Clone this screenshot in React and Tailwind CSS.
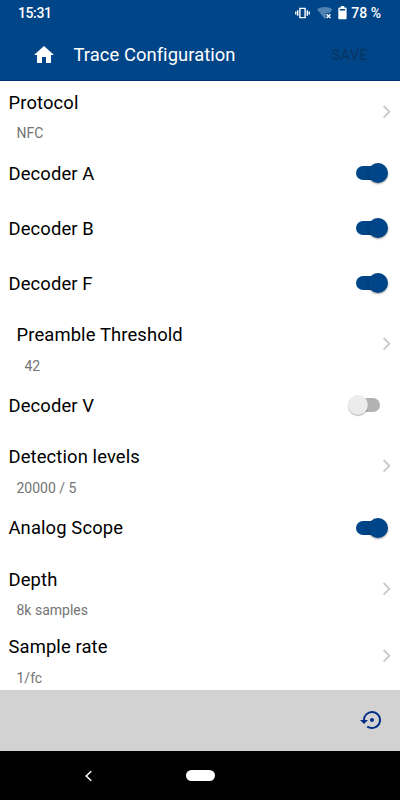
import { useState } from 'react';
import { MdHome, MdSettingsBackupRestore } from 'react-icons/md';

function StatusBar() {
  return (
    <div className="flex h-[26px] items-center justify-between pl-[18px] pr-[19px] text-[14px] font-medium leading-none text-white">
      <span className="tracking-[-0.4px]">15:31</span>
      <div className="flex items-center">
        {/* Vibrate */}
        <svg className="h-[14px] w-[15px]" viewBox="0 0 15 14" fill="none" stroke="currentColor" strokeWidth="1.4">
          <path d="M4.9 2.4h5.2v9.2H4.9zM2.7 4.2v5.6M12.3 4.2v5.6M.8 5.6v2.8M14.2 5.6v2.8" />
        </svg>
        {/* Wifi, no connection */}
        <svg className="ml-[7px] h-[14px] w-[16px]" viewBox="0 0 16 14" fill="none">
          <path d="M0 3.3C4.5.2 11 .2 15.4 3.3L12.6 7H9v4.4L7.7 13z" fill="#5082b3" />
          <path d="M9.6 8.3l3.8 3.8M13.4 8.3l-3.8 3.8" stroke="white" strokeWidth="1.4" />
        </svg>
        <svg className="ml-[5px] h-[14px] w-[9px]" viewBox="0 0 9 14">
          <path fillRule="evenodd" d="M2.8 0h3.4v1.4h1.4q1 0 1 1v9.9q0 1-1 1H1.3q-1 0-1-1V2.4q0-1 1-1h1.5zM1.7 2.9v1.5h5.5V2.9z" fill="white" />
        </svg>
        <span className="ml-[4px]">78 %</span>
      </div>
    </div>
  );
}

function Header() {
  return (
    <header className="h-[81px] shrink-0 border-b border-[#003070] bg-[#004588]">
      <StatusBar />
      <div className="flex h-[54px] items-center pl-8 pr-8">
        <MdHome className="mt-[3px] size-6 text-white" />
        <h1 className="ml-[17.5px] mt-[4px] text-[18.4px] tracking-[0.05px] text-white">Trace Configuration</h1>
        <button className="ml-auto mt-[5px] text-[14px] tracking-[0.6px] text-[#08345f]">SAVE</button>
      </div>
    </header>
  );
}

function Toggle({ on, onChange }) {
  return (
    <button role="switch" aria-checked={on} onClick={onChange} className={`mb-[1px] flex h-[20px] w-[32px] items-center ${on ? '' : 'mr-[8px]'}`}>
      {on ? (
        <>
          <span className="h-[14px] w-[24px] rounded-l-full bg-[#004588]" />
          <span className="-ml-[12px] size-[20px] shrink-0 rounded-full bg-[#004588] shadow-[0_1px_2px_rgba(0,0,0,0.4)]" />
        </>
      ) : (
        <>
          <span className="z-10 -mr-[12px] size-[20px] shrink-0 rounded-full bg-[#ececec] shadow-[0_1px_1px_rgba(0,0,0,0.3)]" />
          <span className="h-[14px] w-[24px] rounded-r-full bg-[#b2b2b2]" />
        </>
      )}
    </button>
  );
}

function SwitchRow({ label, defaultOn = false }) {
  const [on, setOn] = useState(defaultOn);
  return (
    <div className="flex h-[55px] shrink-0 items-center justify-between pl-[8.5px] pr-[12px]">
      <span className="text-[18.4px] tracking-[0.12px]">{label}</span>
      <Toggle on={on} onChange={() => setOn(!on)} />
    </div>
  );
}

function ValueRow({ label, value, className = 'pl-[8.5px]' }) {
  return (
    <div className={`flex h-[67.4px] shrink-0 items-start justify-between pr-[9px] ${className}`}>
      <div className="pt-[12px]">
        <div className="text-[18.4px] leading-[24px] tracking-[0.12px]">{label}</div>
        <div className="mt-[8.6px] pl-2 text-[14px] leading-[20px] text-[#747474]">{value}</div>
      </div>
      <svg className="mt-[26px] h-[14px] w-[9px]" viewBox="0 0 9 14" fill="none" stroke="#c9c9c9" strokeWidth="1.8">
        <path d="M1.6 1l5.8 5.8-5.8 5.8" />
      </svg>
    </div>
  );
}

export default function App() {
  return (
    <div className="flex h-[800px] w-[400px] flex-col overflow-hidden bg-white font-[Roboto,sans-serif] text-black">
      <Header />
      <main className="flex h-[609px] shrink-0 flex-col overflow-hidden">
        <ValueRow label="Protocol" value="NFC" className="-mt-[2.4px] pl-[8.5px]" />
        <SwitchRow label="Decoder A" defaultOn />
        <SwitchRow label="Decoder B" defaultOn />
        <SwitchRow label="Decoder F" defaultOn />
        <ValueRow label="Preamble Threshold" value="42" className="pl-[16.5px]" />
        <SwitchRow label="Decoder V" />
        <ValueRow label="Detection levels" value="20000 / 5" />
        <SwitchRow label="Analog Scope" defaultOn />
        <ValueRow label="Depth" value="8k samples" />
        <ValueRow label="Sample rate" value="1/fc" />
      </main>
      <footer className="flex h-[61px] shrink-0 items-center justify-end bg-[#d2d2d2] pr-4">
        <MdSettingsBackupRestore className="mb-[2px] size-6 text-[#002f87]" />
      </footer>
      <nav className="flex h-[49px] shrink-0 items-center bg-black pl-[84px]">
        <svg className="h-[12px] w-[9px]" viewBox="0 0 9 12" fill="none" stroke="white" strokeWidth="1.5">
          <path d="M7.2 1.2L2.2 6l5 4.8" />
        </svg>
        <span className="ml-[93px] h-[11px] w-[29px] rounded-full bg-white" />
      </nav>
    </div>
  );
}
